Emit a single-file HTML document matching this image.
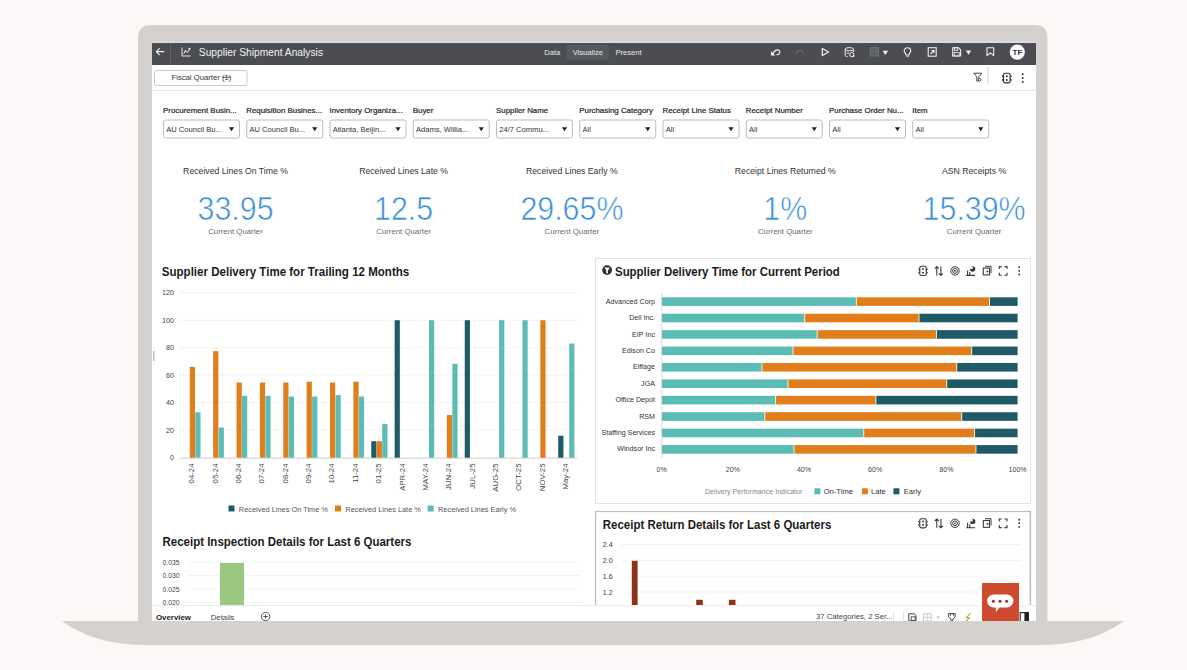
<!DOCTYPE html>
<html><head><meta charset="utf-8">
<style>
*{box-sizing:border-box;margin:0;padding:0}
html,body{width:1187px;height:670px;overflow:hidden;background:#fcf8f7}
svg text{font-family:"Liberation Sans",sans-serif;white-space:pre}
#root{position:relative;width:1187px;height:670px}
.a{position:absolute}
</style></head><body><div id="root">
<svg class="a" style="left:0;top:0" width="1187" height="670" viewBox="0 0 1187 670">
<path d="M62,621 L1124,621 C1101,637 1076,645 1036,645 L150,645 C110,645 85,637 62,621 Z" fill="#d5d1ce"/>
<path d="M138,622 L138,38 Q138,25 151,25 L1034.5,25 Q1047.5,25 1047.5,38 L1047.5,622 Z" fill="#d5d1ce"/>
<rect x="152" y="41" width="884" height="2" fill="#dddbd9"/>
<clipPath id="scr"><rect x="152" y="43" width="884" height="578"/></clipPath>
<g clip-path="url(#scr)">
<rect x="152" y="43" width="884" height="578" fill="#fff"/>
<rect x="152" y="43" width="884" height="22" fill="#4b4d53" />
<line x1="170.5" y1="43" x2="170.5" y2="65" stroke="#5f6167" stroke-width="1" />
<path d="M156.3,51.6 L163.8,51.6 M159.3,48.6 L156.3,51.6 L159.3,54.6" fill="none" stroke="#f4f4f4" stroke-width="1.2" stroke-linecap="round" stroke-linejoin="round"/>
<path d="M182,47.5 L182,56 L190.5,56" fill="none" stroke="#e8e8e8" stroke-width="1"/>
<path d="M183.5,54 L185.5,51 L187.5,52.5 L189.5,49" fill="none" stroke="#e8e8e8" stroke-width="1"/>
<circle cx="189.5" cy="48.8" r="1.1" fill="#e8e8e8"/><circle cx="185.5" cy="51" r="0.9" fill="#e8e8e8"/>
<path d="M772.5,54.3 C774,50 778.5,48.5 779.6,51.2 C780.4,53.3 778.3,55 776.5,54.6" fill="none" stroke="#f4f4f4" stroke-width="1.2"/>
<path d="M771,51.3 L771,55.6 L775.3,55.6 Z" fill="#f4f4f4"/>
<path d="M796.7,54.5 C796.5,50 802.5,48.5 803.3,53.5" fill="none" stroke="#6a6c72" stroke-width="1.3"/>
<path d="M822.3,48.5 L828.6,52 L822.3,55.5 Z" fill="none" stroke="#f4f4f4" stroke-width="1.2" stroke-linejoin="round"/>
<ellipse cx="849.4" cy="49.2" rx="4.2" ry="1.6" fill="none" stroke="#eeeeee" stroke-width="1"/>
<path d="M845.2,49.2 L845.2,55.3 C845.2,56.2 846.5,56.6 847.5,56.6 M853.6,49.2 L853.6,52" fill="none" stroke="#eeeeee" stroke-width="1"/>
<circle cx="851.8" cy="54.6" r="2.1" fill="none" stroke="#eeeeee" stroke-width="1"/><circle cx="853.5" cy="56" r="1" fill="#eeeeee"/>
<path d="M846.5,53.2 L849,53.2" stroke="#eeeeee" stroke-width="1"/>
<rect x="870.3" y="47.7" width="8.2" height="8.2" fill="#5e6066" stroke="#6f7177" stroke-width="1.1"/>
<line x1="870.3" y1="51.8" x2="878.5" y2="51.8" stroke="#6f7177" stroke-width="0.8" />
<path d="M882.7,50.8 L888,50.8 L885.35,54.9 Z" fill="#f4f4f4"/>
<path d="M905.4,53.2 C903.4,51.5 903.8,47.8 907.5,47.8 C911.2,47.8 911.6,51.5 909.6,53.2 L909,55 L906,55 Z" fill="none" stroke="#f4f4f4" stroke-width="1.1"/>
<line x1="906.2" y1="56.3" x2="908.8" y2="56.3" stroke="#f4f4f4" stroke-width="0.9" />
<rect x="928.2" y="47.7" width="8" height="8.5" fill="none" stroke="#f0f0f0" stroke-width="1.1"/>
<path d="M930.5,54 L934,50.5 M931.5,50.5 L934,50.5 L934,53" fill="none" stroke="#f0f0f0" stroke-width="1.1"/>
<path d="M952.7,47.7 L958.5,47.7 L960.6,49.8 L960.6,56 L952.7,56 Z" fill="none" stroke="#f0f0f0" stroke-width="1.1"/>
<rect x="954.5" y="47.7" width="3.3" height="2.6" fill="none" stroke="#f0f0f0" stroke-width="0.9"/>
<rect x="954.2" y="52.6" width="5" height="3.4" fill="none" stroke="#f0f0f0" stroke-width="0.9"/>
<path d="M965.9,50.5 L971.2,50.5 L968.55,54.7 Z" fill="#f4f4f4"/>
<path d="M987,47.8 L993.7,47.8 L993.7,55.6 L990.35,52.8 L987,55.6 Z" fill="none" stroke="#f0f0f0" stroke-width="1.1" stroke-linejoin="round"/>
<circle cx="1017.3" cy="52.1" r="7.6" fill="#ffffff"/>
<text x="1017.4" y="55.1" font-size="8" fill="#333" font-weight="bold" text-anchor="middle" >TF</text>
<path d="M973.8,73.2 L981.8,73.2 L978.8,76.8 L978.8,80.2 L976.8,81.2 L976.8,76.8 Z" fill="none" stroke="#333" stroke-width="0.9" stroke-linejoin="round"/>
<circle cx="979.5" cy="79.8" r="1.4" fill="#fff" stroke="#333" stroke-width="0.9"/>
<rect x="1003.5" y="73.3" width="6.6" height="9.6" rx="1.7" fill="none" stroke="#333" stroke-width="1.1"/>
<path d="M1003.5,75.1 L1002.0,76.3 L1003.5,77.5 M1003.5,78.69999999999999 L1002.0,79.89999999999999 L1003.5,81.1 M1010.0999999999999,75.1 L1011.5999999999999,76.3 L1010.0999999999999,77.5 M1010.0999999999999,78.69999999999999 L1011.5999999999999,79.89999999999999 L1010.0999999999999,81.1" fill="none" stroke="#333" stroke-width="1"/>
<circle cx="1006.8" cy="76.19999999999999" r="1.05" fill="#333"/><circle cx="1006.8" cy="80.0" r="1.05" fill="#333"/>
<circle cx="1022.7" cy="74.20" r="1" fill="#333"/>
<circle cx="1022.7" cy="78.10" r="1" fill="#333"/>
<circle cx="1022.7" cy="82.00" r="1" fill="#333"/>
<line x1="153.8" y1="351" x2="153.8" y2="361" stroke="#9a9a9a" stroke-width="1" />
<text x="198.8" y="56.3" font-size="10.25" fill="#f2f2f2" font-weight="normal" text-anchor="start" >Supplier Shipment Analysis</text>
<rect x="566.7" y="44.4" width="42.2" height="15.3" fill="#56595f" rx="2"/>
<text x="544.2" y="55.3" font-size="7.6" fill="#e8e8e8" font-weight="normal" text-anchor="start" >Data</text>
<text x="572.7" y="55.3" font-size="7.6" fill="#e8e8e8" font-weight="normal" text-anchor="start" >Visualize</text>
<text x="615.4" y="55.3" font-size="7.6" fill="#e8e8e8" font-weight="normal" text-anchor="start" >Present</text>
<rect x="154.5" y="70.5" width="92.5" height="15" fill="#fff" stroke="#c9c9c9" stroke-width="1" rx="2"/>
<text x="171.5" y="80.1" font-size="7.7" fill="#333" font-weight="normal" text-anchor="start" >Fiscal Quarter (1)</text>
<line x1="222.6" y1="77.3" x2="230.4" y2="77.3" stroke="#333" stroke-width="0.75" />
<line x1="152" y1="90.5" x2="1036" y2="90.5" stroke="#e6e6e6" stroke-width="1" />
<line x1="988" y1="66.5" x2="988" y2="84.5" stroke="#d0d0d0" stroke-width="1" />
<text x="163.0" y="113.3" font-size="7.9" fill="#2a2a2a" font-weight="normal" text-anchor="start" stroke="#2a2a2a" stroke-width="0.22">Procurement Busin...</text>
<rect x="163.5" y="120" width="76" height="18" fill="#fff" stroke="#bdbdbd" stroke-width="1" rx="2"/>
<text x="166.2" y="131.8" font-size="7.6" fill="#333" font-weight="normal" text-anchor="start" >AU Council Bu...</text>
<path d="M228.90,127.2 L234.10,127.2 L231.50,131.2 Z" fill="#222"/>
<text x="246.25" y="113.3" font-size="7.9" fill="#2a2a2a" font-weight="normal" text-anchor="start" stroke="#2a2a2a" stroke-width="0.22">Requisition Busines...</text>
<rect x="246.75" y="120" width="76" height="18" fill="#fff" stroke="#bdbdbd" stroke-width="1" rx="2"/>
<text x="249.45" y="131.8" font-size="7.6" fill="#333" font-weight="normal" text-anchor="start" >AU Council Bu...</text>
<path d="M312.15,127.2 L317.35,127.2 L314.75,131.2 Z" fill="#222"/>
<text x="329.5" y="113.3" font-size="7.9" fill="#2a2a2a" font-weight="normal" text-anchor="start" stroke="#2a2a2a" stroke-width="0.22">Inventory Organiza...</text>
<rect x="330.0" y="120" width="76" height="18" fill="#fff" stroke="#bdbdbd" stroke-width="1" rx="2"/>
<text x="332.7" y="131.8" font-size="7.6" fill="#333" font-weight="normal" text-anchor="start" >Atlanta, Beijin...</text>
<path d="M395.40,127.2 L400.60,127.2 L398.00,131.2 Z" fill="#222"/>
<text x="412.75" y="113.3" font-size="7.9" fill="#2a2a2a" font-weight="normal" text-anchor="start" stroke="#2a2a2a" stroke-width="0.22">Buyer</text>
<rect x="413.25" y="120" width="76" height="18" fill="#fff" stroke="#bdbdbd" stroke-width="1" rx="2"/>
<text x="415.95" y="131.8" font-size="7.6" fill="#333" font-weight="normal" text-anchor="start" >Adams, Willia...</text>
<path d="M478.65,127.2 L483.85,127.2 L481.25,131.2 Z" fill="#222"/>
<text x="496.0" y="113.3" font-size="7.9" fill="#2a2a2a" font-weight="normal" text-anchor="start" stroke="#2a2a2a" stroke-width="0.22">Supplier Name</text>
<rect x="496.5" y="120" width="76" height="18" fill="#fff" stroke="#bdbdbd" stroke-width="1" rx="2"/>
<text x="499.2" y="131.8" font-size="7.6" fill="#333" font-weight="normal" text-anchor="start" >24/7 Commu...</text>
<path d="M561.90,127.2 L567.10,127.2 L564.50,131.2 Z" fill="#222"/>
<text x="579.25" y="113.3" font-size="7.9" fill="#2a2a2a" font-weight="normal" text-anchor="start" stroke="#2a2a2a" stroke-width="0.22">Purchasing Category</text>
<rect x="579.75" y="120" width="76" height="18" fill="#fff" stroke="#bdbdbd" stroke-width="1" rx="2"/>
<text x="582.45" y="131.8" font-size="7.6" fill="#333" font-weight="normal" text-anchor="start" >All</text>
<path d="M645.15,127.2 L650.35,127.2 L647.75,131.2 Z" fill="#222"/>
<text x="662.5" y="113.3" font-size="7.9" fill="#2a2a2a" font-weight="normal" text-anchor="start" stroke="#2a2a2a" stroke-width="0.22">Receipt Line Status</text>
<rect x="663.0" y="120" width="76" height="18" fill="#fff" stroke="#bdbdbd" stroke-width="1" rx="2"/>
<text x="665.7" y="131.8" font-size="7.6" fill="#333" font-weight="normal" text-anchor="start" >All</text>
<path d="M728.40,127.2 L733.60,127.2 L731.00,131.2 Z" fill="#222"/>
<text x="745.75" y="113.3" font-size="7.9" fill="#2a2a2a" font-weight="normal" text-anchor="start" stroke="#2a2a2a" stroke-width="0.22">Receipt Number</text>
<rect x="746.25" y="120" width="76" height="18" fill="#fff" stroke="#bdbdbd" stroke-width="1" rx="2"/>
<text x="748.95" y="131.8" font-size="7.6" fill="#333" font-weight="normal" text-anchor="start" >All</text>
<path d="M811.65,127.2 L816.85,127.2 L814.25,131.2 Z" fill="#222"/>
<text x="829.0" y="113.3" font-size="7.9" fill="#2a2a2a" font-weight="normal" text-anchor="start" stroke="#2a2a2a" stroke-width="0.22">Purchase Order Nu...</text>
<rect x="829.5" y="120" width="76" height="18" fill="#fff" stroke="#bdbdbd" stroke-width="1" rx="2"/>
<text x="832.2" y="131.8" font-size="7.6" fill="#333" font-weight="normal" text-anchor="start" >All</text>
<path d="M894.90,127.2 L900.10,127.2 L897.50,131.2 Z" fill="#222"/>
<text x="912.25" y="113.3" font-size="7.9" fill="#2a2a2a" font-weight="normal" text-anchor="start" stroke="#2a2a2a" stroke-width="0.22">Item</text>
<rect x="912.75" y="120" width="76" height="18" fill="#fff" stroke="#bdbdbd" stroke-width="1" rx="2"/>
<text x="915.45" y="131.8" font-size="7.6" fill="#333" font-weight="normal" text-anchor="start" >All</text>
<path d="M978.15,127.2 L983.35,127.2 L980.75,131.2 Z" fill="#222"/>
<text x="235.5" y="174.2" font-size="8.7" fill="#333" font-weight="normal" text-anchor="middle" >Received Lines On Time %</text>
<text transform="translate(235.5,220.2) scale(1,1.1)" font-size="30.4" fill="#3b90d6" text-anchor="middle" stroke="#fff" stroke-width="0.55">33.95</text>
<text x="235.5" y="234.3" font-size="7.8" fill="#6b6b6b" font-weight="normal" text-anchor="middle" >Current Quarter</text>
<text x="403.6" y="174.2" font-size="8.7" fill="#333" font-weight="normal" text-anchor="middle" >Received Lines Late %</text>
<text transform="translate(403.6,220.2) scale(1,1.1)" font-size="30.4" fill="#3b90d6" text-anchor="middle" stroke="#fff" stroke-width="0.55">12.5</text>
<text x="403.6" y="234.3" font-size="7.8" fill="#6b6b6b" font-weight="normal" text-anchor="middle" >Current Quarter</text>
<text x="571.9" y="174.2" font-size="8.7" fill="#333" font-weight="normal" text-anchor="middle" >Received Lines Early %</text>
<text transform="translate(571.9,220.2) scale(1,1.1)" font-size="30.4" fill="#3b90d6" text-anchor="middle" stroke="#fff" stroke-width="0.55">29.65%</text>
<text x="571.9" y="234.3" font-size="7.8" fill="#6b6b6b" font-weight="normal" text-anchor="middle" >Current Quarter</text>
<text x="785.3" y="174.2" font-size="8.7" fill="#333" font-weight="normal" text-anchor="middle" >Receipt Lines Returned %</text>
<text transform="translate(785.3,220.2) scale(1,1.1)" font-size="30.4" fill="#3b90d6" text-anchor="middle" stroke="#fff" stroke-width="0.55">1%</text>
<text x="785.3" y="234.3" font-size="7.8" fill="#6b6b6b" font-weight="normal" text-anchor="middle" >Current Quarter</text>
<text x="974.1" y="174.2" font-size="8.7" fill="#333" font-weight="normal" text-anchor="middle" >ASN Receipts %</text>
<text transform="translate(974.1,220.2) scale(1,1.1)" font-size="30.4" fill="#3b90d6" text-anchor="middle" stroke="#fff" stroke-width="0.55">15.39%</text>
<text x="974.1" y="234.3" font-size="7.8" fill="#6b6b6b" font-weight="normal" text-anchor="middle" >Current Quarter</text>
<text transform="translate(161.8,275.6) scale(1,1.08)" font-size="11.55" fill="#1b1b1b" font-weight="bold" text-anchor="start" >Supplier Delivery Time for Trailing 12 Months</text>
<text x="174" y="460.3" font-size="7.2" fill="#444" font-weight="normal" text-anchor="end" >0</text>
<line x1="180" y1="430.2" x2="577" y2="430.2" stroke="#f2f2f2" stroke-width="1" />
<text x="174" y="432.8" font-size="7.2" fill="#444" font-weight="normal" text-anchor="end" >20</text>
<line x1="180" y1="402.7" x2="577" y2="402.7" stroke="#f2f2f2" stroke-width="1" />
<text x="174" y="405.3" font-size="7.2" fill="#444" font-weight="normal" text-anchor="end" >40</text>
<line x1="180" y1="375.2" x2="577" y2="375.2" stroke="#f2f2f2" stroke-width="1" />
<text x="174" y="377.8" font-size="7.2" fill="#444" font-weight="normal" text-anchor="end" >60</text>
<line x1="180" y1="347.7" x2="577" y2="347.7" stroke="#f2f2f2" stroke-width="1" />
<text x="174" y="350.3" font-size="7.2" fill="#444" font-weight="normal" text-anchor="end" >80</text>
<line x1="180" y1="320.2" x2="577" y2="320.2" stroke="#f2f2f2" stroke-width="1" />
<text x="174" y="322.8" font-size="7.2" fill="#444" font-weight="normal" text-anchor="end" >100</text>
<line x1="180" y1="292.7" x2="577" y2="292.7" stroke="#f2f2f2" stroke-width="1" />
<text x="174" y="295.3" font-size="7.2" fill="#444" font-weight="normal" text-anchor="end" >120</text>
<line x1="180" y1="458.2" x2="577" y2="458.2" stroke="#cfcfcf" stroke-width="1" />
<rect x="189.8" y="366.95" width="5.2" height="90.75" fill="#e07e1c" />
<rect x="195.3" y="412.32" width="5.2" height="45.38" fill="#5bbcb5" />
<text transform="translate(194.20,463.5) rotate(-90)" font-size="7.8" fill="#444" text-anchor="end">04-24</text>
<rect x="213.17" y="351.14" width="5.2" height="106.56" fill="#e07e1c" />
<rect x="218.67" y="427.45" width="5.2" height="30.25" fill="#5bbcb5" />
<text transform="translate(217.57,463.5) rotate(-90)" font-size="7.8" fill="#444" text-anchor="end">05-24</text>
<rect x="236.54" y="382.49" width="5.2" height="75.21" fill="#e07e1c" />
<rect x="242.04" y="395.82" width="5.2" height="61.88" fill="#5bbcb5" />
<text transform="translate(240.94,463.5) rotate(-90)" font-size="7.8" fill="#444" text-anchor="end">06-24</text>
<rect x="259.91" y="382.49" width="5.2" height="75.21" fill="#e07e1c" />
<rect x="265.41" y="395.82" width="5.2" height="61.88" fill="#5bbcb5" />
<text transform="translate(264.31,463.5) rotate(-90)" font-size="7.8" fill="#444" text-anchor="end">07-24</text>
<rect x="283.28" y="382.49" width="5.2" height="75.21" fill="#e07e1c" />
<rect x="288.78" y="396.51" width="5.2" height="61.19" fill="#5bbcb5" />
<text transform="translate(287.68,463.5) rotate(-90)" font-size="7.8" fill="#444" text-anchor="end">08-24</text>
<rect x="306.65" y="381.66" width="5.2" height="76.04" fill="#e07e1c" />
<rect x="312.15" y="396.51" width="5.2" height="61.19" fill="#5bbcb5" />
<text transform="translate(311.05,463.5) rotate(-90)" font-size="7.8" fill="#444" text-anchor="end">09-24</text>
<rect x="330.02" y="382.49" width="5.2" height="75.21" fill="#e07e1c" />
<rect x="335.52" y="395.14" width="5.2" height="62.56" fill="#5bbcb5" />
<text transform="translate(334.42,463.5) rotate(-90)" font-size="7.8" fill="#444" text-anchor="end">10-24</text>
<rect x="353.39" y="381.66" width="5.2" height="76.04" fill="#e07e1c" />
<rect x="358.89" y="396.51" width="5.2" height="61.19" fill="#5bbcb5" />
<text transform="translate(357.79,463.5) rotate(-90)" font-size="7.8" fill="#444" text-anchor="end">11-24</text>
<rect x="371.26" y="441.2" width="5.2" height="16.5" fill="#1f5b66" />
<rect x="376.76" y="441.2" width="5.2" height="16.5" fill="#e07e1c" />
<rect x="382.26" y="424.01" width="5.2" height="33.69" fill="#5bbcb5" />
<text transform="translate(381.16,463.5) rotate(-90)" font-size="7.8" fill="#444" text-anchor="end">01-25</text>
<rect x="394.63" y="320.2" width="5.2" height="137.5" fill="#1f5b66" />
<text transform="translate(404.53,463.5) rotate(-90)" font-size="7.8" fill="#444" text-anchor="end">APR-24</text>
<rect x="429.0" y="320.2" width="5.2" height="137.5" fill="#5bbcb5" />
<text transform="translate(427.90,463.5) rotate(-90)" font-size="7.8" fill="#444" text-anchor="end">MAY-24</text>
<rect x="446.87" y="415.07" width="5.2" height="42.62" fill="#e07e1c" />
<rect x="452.37" y="363.79" width="5.2" height="93.91" fill="#5bbcb5" />
<text transform="translate(451.27,463.5) rotate(-90)" font-size="7.8" fill="#444" text-anchor="end">JUN-24</text>
<rect x="464.74" y="320.2" width="5.2" height="137.5" fill="#1f5b66" />
<text transform="translate(474.64,463.5) rotate(-90)" font-size="7.8" fill="#444" text-anchor="end">JUL-25</text>
<rect x="499.11" y="320.2" width="5.2" height="137.5" fill="#5bbcb5" />
<text transform="translate(498.01,463.5) rotate(-90)" font-size="7.8" fill="#444" text-anchor="end">AUG-25</text>
<rect x="522.48" y="320.2" width="5.2" height="137.5" fill="#5bbcb5" />
<text transform="translate(521.38,463.5) rotate(-90)" font-size="7.8" fill="#444" text-anchor="end">OCT-25</text>
<rect x="540.35" y="320.2" width="5.2" height="137.5" fill="#e07e1c" />
<text transform="translate(544.75,463.5) rotate(-90)" font-size="7.8" fill="#444" text-anchor="end">NOV-25</text>
<rect x="558.22" y="435.7" width="5.2" height="22.0" fill="#1f5b66" />
<rect x="569.22" y="343.57" width="5.2" height="114.12" fill="#5bbcb5" />
<text transform="translate(568.12,463.5) rotate(-90)" font-size="7.8" fill="#444" text-anchor="end">May-24</text>
<rect x="228.5" y="505.5" width="6" height="6" fill="#1f5b66" />
<text x="238.8" y="512" font-size="7.4" fill="#555" font-weight="normal" text-anchor="start" >Received Lines On Time %</text>
<rect x="335" y="505.5" width="6" height="6" fill="#e07e1c" />
<text x="345.3" y="512" font-size="7.4" fill="#555" font-weight="normal" text-anchor="start" >Received Lines Late %</text>
<rect x="427.6" y="505.5" width="6" height="6" fill="#5bbcb5" />
<text x="438" y="512" font-size="7.4" fill="#555" font-weight="normal" text-anchor="start" >Received Lines Early %</text>
<rect x="595.5" y="258.5" width="435" height="245" fill="#fff" stroke="#e3e3e3" stroke-width="1"/>
<circle cx="607.1" cy="270.1" r="4.9" fill="#2e2e2e"/>
<path d="M604.3,267.6 L609.9,267.6 L607.9,270.6 L607.9,273.4 L606.3,273.4 L606.3,270.6 Z" fill="#fff"/>
<rect x="919.8" y="266.29999999999995" width="6.4" height="9.2" rx="1.6" fill="none" stroke="#3a3a3a" stroke-width="1.1"/>
<path d="M919.8,268.09999999999997 L918.4,269.29999999999995 L919.8,270.5 M919.8,271.5 L918.4,272.7 L919.8,273.9 M926.2,268.09999999999997 L927.6,269.29999999999995 L926.2,270.5 M926.2,271.5 L927.6,272.7 L926.2,273.9" fill="none" stroke="#3a3a3a" stroke-width="1"/>
<circle cx="923" cy="269.09999999999997" r="1" fill="#3a3a3a"/><circle cx="923" cy="272.7" r="1" fill="#3a3a3a"/>
<path d="M936.8,275.4 L936.8,266.59999999999997 M934.8,268.59999999999997 L936.8,266.59999999999997 L938.8,268.59999999999997 M940.9,266.59999999999997 L940.9,275.4 M938.9,273.4 L940.9,275.4 L942.9,273.4" fill="none" stroke="#3a3a3a" stroke-width="1.1"/>
<circle cx="955" cy="270.9" r="4.2" fill="none" stroke="#3a3a3a" stroke-width="1"/><circle cx="955" cy="270.9" r="2.4" fill="none" stroke="#3a3a3a" stroke-width="1"/><circle cx="955" cy="270.9" r="0.9" fill="#3a3a3a"/>
<path d="M966.3,275.4 L975,275.4 M967.6,275.4 L967.6,270.4 M969.8,275.4 L969.8,271.9" fill="none" stroke="#3a3a3a" stroke-width="1.1"/>
<circle cx="972.6" cy="269.0" r="2.7" fill="#3a3a3a"/><path d="M972.6,269.0 L972.6,266.29999999999995 A2.7,2.7 0 0 0 969.9,269.0 Z" fill="#fff"/>
<rect x="983.3" y="268.09999999999997" width="6.2" height="6.8" fill="none" stroke="#3a3a3a" stroke-width="1.1"/>
<path d="M985,266.29999999999995 L991,266.29999999999995 L991,273.09999999999997" fill="none" stroke="#3a3a3a" stroke-width="1"/>
<path d="M986.4,271.5 L988.4,271.5 M987.4,270.5 L987.4,272.5" stroke="#3a3a3a" stroke-width="0.9"/>
<path d="M999.3,269.09999999999997 L999.3,266.59999999999997 L1001.8,266.59999999999997 M1004.5,266.59999999999997 L1007,266.59999999999997 L1007,269.09999999999997 M1007,272.7 L1007,275.2 L1004.5,275.2 M1001.8,275.2 L999.3,275.2 L999.3,272.7" fill="none" stroke="#3a3a3a" stroke-width="1.1"/>
<circle cx="1019.2" cy="267.30" r="0.95" fill="#3a3a3a"/>
<circle cx="1019.2" cy="270.90" r="0.95" fill="#3a3a3a"/>
<circle cx="1019.2" cy="274.50" r="0.95" fill="#3a3a3a"/>
<text transform="translate(615,275.7) scale(1,1.08)" font-size="11.45" fill="#1b1b1b" font-weight="bold" text-anchor="start" >Supplier Delivery Time for Current Period</text>
<rect x="661.6" y="297.3" width="194.73" height="8.6" fill="#5bbcb5" />
<rect x="856.33" y="297.3" width="133.14" height="8.6" fill="#e07e1c" />
<rect x="989.48" y="297.3" width="28.12" height="8.6" fill="#1f5b66" />
<line x1="856.33" y1="297.3" x2="856.33" y2="305.9" stroke="#fbf6e8" stroke-width="0.9" />
<line x1="989.48" y1="297.3" x2="989.48" y2="305.9" stroke="#fbf6e8" stroke-width="0.9" />
<text x="655" y="303.7" font-size="7.15" fill="#333" font-weight="normal" text-anchor="end" >Advanced Corp</text>
<rect x="661.6" y="313.72" width="143.11" height="8.6" fill="#5bbcb5" />
<rect x="804.71" y="313.72" width="114.28" height="8.6" fill="#e07e1c" />
<rect x="918.99" y="313.72" width="98.61" height="8.6" fill="#1f5b66" />
<line x1="804.71" y1="313.72" x2="804.71" y2="322.32" stroke="#fbf6e8" stroke-width="0.9" />
<line x1="918.99" y1="313.72" x2="918.99" y2="322.32" stroke="#fbf6e8" stroke-width="0.9" />
<text x="655" y="320.12" font-size="7.15" fill="#333" font-weight="normal" text-anchor="end" >Dell Inc.</text>
<rect x="661.6" y="330.14" width="155.57" height="8.6" fill="#5bbcb5" />
<rect x="817.17" y="330.14" width="119.26" height="8.6" fill="#e07e1c" />
<rect x="936.43" y="330.14" width="81.17" height="8.6" fill="#1f5b66" />
<line x1="817.17" y1="330.14" x2="817.17" y2="338.74" stroke="#fbf6e8" stroke-width="0.9" />
<line x1="936.43" y1="330.14" x2="936.43" y2="338.74" stroke="#fbf6e8" stroke-width="0.9" />
<text x="655" y="336.54" font-size="7.15" fill="#333" font-weight="normal" text-anchor="end" >EIP Inc</text>
<rect x="661.6" y="346.56" width="131.36" height="8.6" fill="#5bbcb5" />
<rect x="792.96" y="346.56" width="178.71" height="8.6" fill="#e07e1c" />
<rect x="971.68" y="346.56" width="45.92" height="8.6" fill="#1f5b66" />
<line x1="792.96" y1="346.56" x2="792.96" y2="355.16" stroke="#fbf6e8" stroke-width="0.9" />
<line x1="971.68" y1="346.56" x2="971.68" y2="355.16" stroke="#fbf6e8" stroke-width="0.9" />
<text x="655" y="352.96" font-size="7.15" fill="#333" font-weight="normal" text-anchor="end" >Edison Co</text>
<rect x="661.6" y="362.98" width="100.39" height="8.6" fill="#5bbcb5" />
<rect x="761.99" y="362.98" width="194.73" height="8.6" fill="#e07e1c" />
<rect x="956.72" y="362.98" width="60.88" height="8.6" fill="#1f5b66" />
<line x1="761.99" y1="362.98" x2="761.99" y2="371.58" stroke="#fbf6e8" stroke-width="0.9" />
<line x1="956.72" y1="362.98" x2="956.72" y2="371.58" stroke="#fbf6e8" stroke-width="0.9" />
<text x="655" y="369.38" font-size="7.15" fill="#333" font-weight="normal" text-anchor="end" >Eiffage</text>
<rect x="661.6" y="379.4" width="126.38" height="8.6" fill="#5bbcb5" />
<rect x="787.98" y="379.4" width="158.78" height="8.6" fill="#e07e1c" />
<rect x="946.76" y="379.4" width="70.84" height="8.6" fill="#1f5b66" />
<line x1="787.98" y1="379.4" x2="787.98" y2="388.0" stroke="#fbf6e8" stroke-width="0.9" />
<line x1="946.76" y1="379.4" x2="946.76" y2="388.0" stroke="#fbf6e8" stroke-width="0.9" />
<text x="655" y="385.8" font-size="7.15" fill="#333" font-weight="normal" text-anchor="end" >JGA</text>
<rect x="661.6" y="395.82" width="113.92" height="8.6" fill="#5bbcb5" />
<rect x="775.52" y="395.82" width="100.39" height="8.6" fill="#e07e1c" />
<rect x="875.91" y="395.82" width="141.69" height="8.6" fill="#1f5b66" />
<line x1="775.52" y1="395.82" x2="775.52" y2="404.42" stroke="#fbf6e8" stroke-width="0.9" />
<line x1="875.91" y1="395.82" x2="875.91" y2="404.42" stroke="#fbf6e8" stroke-width="0.9" />
<text x="655" y="402.22" font-size="7.15" fill="#333" font-weight="normal" text-anchor="end" >Office Depot</text>
<rect x="661.6" y="412.24" width="103.24" height="8.6" fill="#5bbcb5" />
<rect x="764.84" y="412.24" width="196.87" height="8.6" fill="#e07e1c" />
<rect x="961.71" y="412.24" width="55.89" height="8.6" fill="#1f5b66" />
<line x1="764.84" y1="412.24" x2="764.84" y2="420.84" stroke="#fbf6e8" stroke-width="0.9" />
<line x1="961.71" y1="412.24" x2="961.71" y2="420.84" stroke="#fbf6e8" stroke-width="0.9" />
<text x="655" y="418.64" font-size="7.15" fill="#333" font-weight="normal" text-anchor="end" >RSM</text>
<rect x="661.6" y="428.66" width="202.21" height="8.6" fill="#5bbcb5" />
<rect x="863.81" y="428.66" width="110.72" height="8.6" fill="#e07e1c" />
<rect x="974.52" y="428.66" width="43.08" height="8.6" fill="#1f5b66" />
<line x1="863.81" y1="428.66" x2="863.81" y2="437.26" stroke="#fbf6e8" stroke-width="0.9" />
<line x1="974.52" y1="428.66" x2="974.52" y2="437.26" stroke="#fbf6e8" stroke-width="0.9" />
<text x="655" y="435.06" font-size="7.15" fill="#333" font-weight="normal" text-anchor="end" >Staffing Services</text>
<rect x="661.6" y="445.08" width="132.43" height="8.6" fill="#5bbcb5" />
<rect x="794.03" y="445.08" width="181.92" height="8.6" fill="#e07e1c" />
<rect x="975.95" y="445.08" width="41.65" height="8.6" fill="#1f5b66" />
<line x1="794.03" y1="445.08" x2="794.03" y2="453.68" stroke="#fbf6e8" stroke-width="0.9" />
<line x1="975.95" y1="445.08" x2="975.95" y2="453.68" stroke="#fbf6e8" stroke-width="0.9" />
<text x="655" y="451.48" font-size="7.15" fill="#333" font-weight="normal" text-anchor="end" >Windsor Inc</text>
<line x1="661.6" y1="292.5" x2="661.6" y2="458" stroke="#dcdcdc" stroke-width="1" />
<text x="661.6" y="471.5" font-size="7.1" fill="#444" font-weight="normal" text-anchor="middle" >0%</text>
<text x="732.8" y="471.5" font-size="7.1" fill="#444" font-weight="normal" text-anchor="middle" >20%</text>
<text x="804.0" y="471.5" font-size="7.1" fill="#444" font-weight="normal" text-anchor="middle" >40%</text>
<text x="875.2" y="471.5" font-size="7.1" fill="#444" font-weight="normal" text-anchor="middle" >60%</text>
<text x="946.4" y="471.5" font-size="7.1" fill="#444" font-weight="normal" text-anchor="middle" >80%</text>
<text x="1017.6" y="471.5" font-size="7.1" fill="#444" font-weight="normal" text-anchor="middle" >100%</text>
<text x="705" y="493.8" font-size="7.1" fill="#888" font-weight="normal" text-anchor="start" >Delivery Performance Indicator</text>
<rect x="814.4" y="488.3" width="6" height="6" fill="#5bbcb5" />
<text x="823.7" y="494" font-size="7.6" fill="#333" font-weight="normal" text-anchor="start" >On-Time</text>
<rect x="861.9" y="488.3" width="6" height="6" fill="#e07e1c" />
<text x="871" y="494" font-size="7.6" fill="#333" font-weight="normal" text-anchor="start" >Late</text>
<rect x="893.4" y="488.3" width="6" height="6" fill="#1f5b66" />
<text x="903.7" y="494" font-size="7.6" fill="#333" font-weight="normal" text-anchor="start" >Early</text>
<rect x="595.5" y="511.5" width="435" height="120" fill="#fff" stroke="#bdbdbd" stroke-width="1.2"/>
<rect x="919.8" y="518.6999999999999" width="6.4" height="9.2" rx="1.6" fill="none" stroke="#3a3a3a" stroke-width="1.1"/>
<path d="M919.8,520.5 L918.4,521.6999999999999 L919.8,522.9 M919.8,523.9 L918.4,525.0999999999999 L919.8,526.3 M926.2,520.5 L927.6,521.6999999999999 L926.2,522.9 M926.2,523.9 L927.6,525.0999999999999 L926.2,526.3" fill="none" stroke="#3a3a3a" stroke-width="1"/>
<circle cx="923" cy="521.5" r="1" fill="#3a3a3a"/><circle cx="923" cy="525.0999999999999" r="1" fill="#3a3a3a"/>
<path d="M936.8,527.8 L936.8,519.0 M934.8,521.0 L936.8,519.0 L938.8,521.0 M940.9,519.0 L940.9,527.8 M938.9,525.8 L940.9,527.8 L942.9,525.8" fill="none" stroke="#3a3a3a" stroke-width="1.1"/>
<circle cx="955" cy="523.3" r="4.2" fill="none" stroke="#3a3a3a" stroke-width="1"/><circle cx="955" cy="523.3" r="2.4" fill="none" stroke="#3a3a3a" stroke-width="1"/><circle cx="955" cy="523.3" r="0.9" fill="#3a3a3a"/>
<path d="M966.3,527.8 L975,527.8 M967.6,527.8 L967.6,522.8 M969.8,527.8 L969.8,524.3" fill="none" stroke="#3a3a3a" stroke-width="1.1"/>
<circle cx="972.6" cy="521.4" r="2.7" fill="#3a3a3a"/><path d="M972.6,521.4 L972.6,518.6999999999999 A2.7,2.7 0 0 0 969.9,521.4 Z" fill="#fff"/>
<rect x="983.3" y="520.5" width="6.2" height="6.8" fill="none" stroke="#3a3a3a" stroke-width="1.1"/>
<path d="M985,518.6999999999999 L991,518.6999999999999 L991,525.5" fill="none" stroke="#3a3a3a" stroke-width="1"/>
<path d="M986.4,523.9 L988.4,523.9 M987.4,522.9 L987.4,524.9" stroke="#3a3a3a" stroke-width="0.9"/>
<path d="M999.3,521.5 L999.3,519.0 L1001.8,519.0 M1004.5,519.0 L1007,519.0 L1007,521.5 M1007,525.0999999999999 L1007,527.5999999999999 L1004.5,527.5999999999999 M1001.8,527.5999999999999 L999.3,527.5999999999999 L999.3,525.0999999999999" fill="none" stroke="#3a3a3a" stroke-width="1.1"/>
<circle cx="1019.2" cy="519.70" r="0.95" fill="#3a3a3a"/>
<circle cx="1019.2" cy="523.30" r="0.95" fill="#3a3a3a"/>
<circle cx="1019.2" cy="526.90" r="0.95" fill="#3a3a3a"/>
<text transform="translate(602.8,528.5) scale(1,1.08)" font-size="11.5" fill="#1b1b1b" font-weight="bold" text-anchor="start" >Receipt Return Details for Last 6 Quarters</text>
<line x1="621" y1="544.6" x2="1020.6" y2="544.6" stroke="#f3f3f3" stroke-width="1" />
<text x="602.8" y="547.2" font-size="7" fill="#333" font-weight="normal" text-anchor="start" >2.4</text>
<line x1="621" y1="560.4" x2="1020.6" y2="560.4" stroke="#f3f3f3" stroke-width="1" />
<text x="602.8" y="563.0" font-size="7" fill="#333" font-weight="normal" text-anchor="start" >2.0</text>
<line x1="621" y1="576.2" x2="1020.6" y2="576.2" stroke="#f3f3f3" stroke-width="1" />
<text x="602.8" y="578.8" font-size="7" fill="#333" font-weight="normal" text-anchor="start" >1.6</text>
<line x1="621" y1="592.0" x2="1020.6" y2="592.0" stroke="#f3f3f3" stroke-width="1" />
<text x="602.8" y="594.6" font-size="7" fill="#333" font-weight="normal" text-anchor="start" >1.2</text>
<line x1="621" y1="607.8" x2="1020.6" y2="607.8" stroke="#f3f3f3" stroke-width="1" />
<text x="602.8" y="610.4" font-size="7" fill="#333" font-weight="normal" text-anchor="start" >0.8</text>
<rect x="631.8" y="560.8" width="5.8" height="60" fill="#8d3118" />
<rect x="696.2" y="599.8" width="6.6" height="30" fill="#8d3118" />
<rect x="728.9" y="599.8" width="6.6" height="30" fill="#8d3118" />
<text transform="translate(162.5,545.9) scale(1,1.08)" font-size="11.5" fill="#1b1b1b" font-weight="bold" text-anchor="start" >Receipt Inspection Details for Last 6 Quarters</text>
<line x1="188" y1="562.2" x2="580" y2="562.2" stroke="#f3f3f3" stroke-width="1" />
<text x="162.5" y="564.7" font-size="6.8" fill="#444" font-weight="normal" text-anchor="start" >0.035</text>
<line x1="188" y1="575.6" x2="580" y2="575.6" stroke="#f3f3f3" stroke-width="1" />
<text x="162.5" y="578.1" font-size="6.8" fill="#444" font-weight="normal" text-anchor="start" >0.030</text>
<line x1="188" y1="589.1" x2="580" y2="589.1" stroke="#f3f3f3" stroke-width="1" />
<text x="162.5" y="591.6" font-size="6.8" fill="#444" font-weight="normal" text-anchor="start" >0.025</text>
<line x1="188" y1="602.6" x2="580" y2="602.6" stroke="#f3f3f3" stroke-width="1" />
<text x="162.5" y="605.1" font-size="6.8" fill="#444" font-weight="normal" text-anchor="start" >0.020</text>
<rect x="220" y="563" width="24" height="50" fill="#9bc880" />
<rect x="152" y="605.3" width="884" height="16" fill="#fff" />
<line x1="152" y1="605.5" x2="1036" y2="605.5" stroke="#ececec" stroke-width="1" />
<text x="155.9" y="619.6" font-size="7.9" fill="#222" font-weight="bold" text-anchor="start" >Overview</text>
<text x="210.7" y="619.6" font-size="7.8" fill="#444" font-weight="normal" text-anchor="start" >Details</text>
<circle cx="265.6" cy="616.5" r="4.2" fill="none" stroke="#444" stroke-width="0.9"/>
<line x1="263.3" y1="616.5" x2="267.9" y2="616.5" stroke="#444" stroke-width="0.9" />
<line x1="265.6" y1="614.2" x2="265.6" y2="618.8" stroke="#444" stroke-width="0.9" />
<text x="816" y="619.4" font-size="7.7" fill="#444" font-weight="normal" text-anchor="start" >37 Categories, 2 Ser...</text>
<rect x="982" y="583" width="37" height="38" fill="#d04a2f" />
<path d="M993.5,594.6 L1007,594.6 A6.4,6.4 0 0 1 1007,607.4 L999.5,607.4 L996,612 L995.6,607.4 L993.5,607.4 A6.4,6.4 0 0 1 993.5,594.6 Z" fill="#fff"/>
<circle cx="993.4" cy="601.2" r="1.5" fill="#8e2f3a"/>
<circle cx="1000" cy="601.2" r="1.5" fill="#8e2f3a"/>
<circle cx="1006.6" cy="601.2" r="1.5" fill="#8e2f3a"/>
<rect x="1020.2" y="612.6" width="8" height="9" fill="#fff" stroke="#222" stroke-width="1.1"/>
<rect x="1024.4" y="612" width="4.6" height="9.5" fill="#222" />
<line x1="1030.3" y1="511" x2="1030.3" y2="605" stroke="#bdbdbd" stroke-width="1.2" />
<path d="M908.8,613.8 L914.2,613.8 L916,615.6 L916,621 L908.8,621 Z" fill="none" stroke="#444" stroke-width="1"/>
<rect x="911.2" y="616.8" width="4" height="3.6" fill="none" stroke="#444" stroke-width="0.9"/>
<rect x="923.4" y="613.8" width="7.6" height="7.4" fill="none" stroke="#c8c8c8" stroke-width="1"/>
<line x1="923.4" y1="617.5" x2="931" y2="617.5" stroke="#c8c8c8" stroke-width="0.8" />
<line x1="927.2" y1="613.8" x2="927.2" y2="621.2" stroke="#c8c8c8" stroke-width="0.8" />
<path d="M936.6,616.6 L939.6,616.6 L938.1,618.8 Z" fill="#aaa"/>
<path d="M948.6,613.6 L955.2,613.6 L955.2,617 L952.8,619 L952.8,621.2 L951,621.2 L951,619 L948.6,617 Z" fill="none" stroke="#444" stroke-width="1"/>
<line x1="950.5" y1="613.6" x2="950.5" y2="615.8" stroke="#444" stroke-width="0.9" />
<line x1="953.3" y1="613.6" x2="953.3" y2="615.8" stroke="#444" stroke-width="0.9" />
<path d="M970.6,613.4 L966,617.8 L969.4,617.8 L965.6,621.6" fill="none" stroke="#86bd3c" stroke-width="1.1" stroke-linejoin="round"/>
<line x1="893.5" y1="612" x2="893.5" y2="621" stroke="#dddddd" stroke-width="0.8" />
<line x1="903.5" y1="612" x2="903.5" y2="621" stroke="#dddddd" stroke-width="0.8" />
</g>
</svg>
</div></body></html>
